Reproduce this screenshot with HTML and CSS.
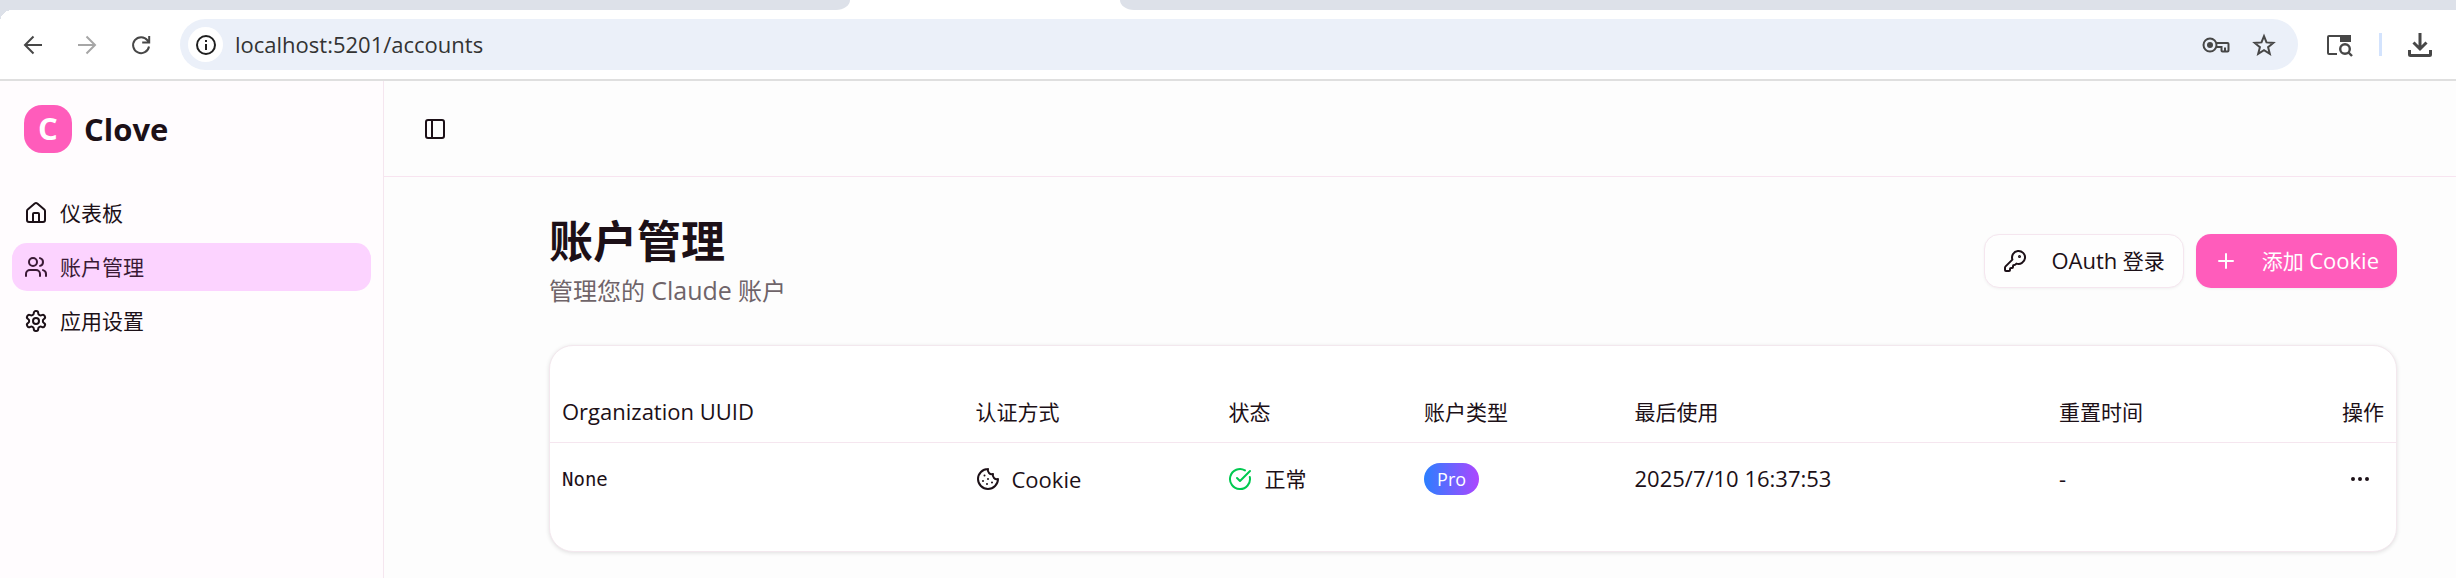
FILE: index.html
```html
<!DOCTYPE html>
<html lang="zh-CN">
  <head>
    <meta charset="UTF-8" />
    <meta name="viewport" content="width=device-width, initial-scale=1.0" />
    <title>Clove</title>
    <link rel="stylesheet" href="styles.css">
  </head>
  <body>
    <div class="browser">
      <div class="tab-strip">
        <div class="tabs-before"></div>
        <div class="tab-active"></div>
        <div class="tabs-after"></div>
      </div>
      <div class="toolbar">
        <div class="nav-buttons">
          <button class="tool-btn" aria-label="Back">
            <svg width="24" height="24" viewBox="0 0 24 24" fill="none" stroke="currentColor" stroke-width="2"><path d="M21 12H4.500M12.500 3.500 4 12l8.500 8.500" /></svg>
          </button>
          <button class="tool-btn" aria-label="Forward" disabled>
            <svg width="24" height="24" viewBox="0 0 24 24" fill="none" stroke="currentColor" stroke-width="2"><path d="M3 12h16.500M11.500 3.500 20 12l-8.500 8.500" /></svg>
          </button>
          <button class="tool-btn" aria-label="Reload">
            <svg width="24" height="24" viewBox="0 0 24 24" fill="none" stroke="currentColor" stroke-width="2"><path d="M20 13.500A8 8 0 1 1 18.500 7.300L20 9M20.200 3v6.500h-7" /></svg>
          </button>
        </div>
        <div class="address-bar">
          <button class="site-info" aria-label="Site information">
            <svg width="22" height="22" viewBox="0 0 22 22" fill="none" stroke="currentColor" stroke-width="2"><circle cx="11" cy="11" r="9" /><path d="M11 10v6M11 6v2" /></svg>
          </button>
          <input class="address-input" type="text" aria-label="Address" value="localhost:5201/accounts" />
          <button class="tool-btn" aria-label="Passwords">
            <svg width="30" height="24" viewBox="0 0 30 24" fill="none" stroke="currentColor" stroke-width="2"><circle cx="9" cy="12" r="6.500" /><circle cx="9" cy="12" r="3" fill="currentColor" stroke="none" /><path d="M15 10h11.500a1 1 0 0 1 1 1v6.500a1 1 0 0 1-1 1h-5a1 1 0 0 1-1-1V14H15M24 14.500v3.500" /></svg>
          </button>
          <button class="tool-btn" aria-label="Bookmark">
            <svg width="24" height="24" viewBox="0 0 24 24" fill="none" stroke="currentColor" stroke-width="2"><path d="m12 3.200 2.500 6.200 6.800.500-5.200 4.300 1.700 6.600-5.800-3.600-5.800 3.600 1.700-6.600-5.200-4.300 6.800-.500z" /></svg>
          </button>
        </div>
        <div class="extra-buttons">
          <button class="tool-btn" aria-label="Search tabs">
            <svg width="28" height="24" viewBox="0 0 28 24" fill="none" stroke="currentColor" stroke-width="2"><path d="M12 21H4a1 1 0 0 1-1-1V4a1 1 0 0 1 1-1h20a1 1 0 0 1 1 1v4" /><path d="M15 2h11v7H15z" fill="currentColor" stroke="none" /><circle cx="20" cy="16" r="4.800" stroke-width="2.400" /><path d="m23 19 4 4" stroke-width="2.400" /></svg>
          </button>
          <span class="toolbar-divider"></span>
          <button class="tool-btn" aria-label="Downloads">
            <svg width="24" height="24" viewBox="0 0 24 24" fill="none" stroke="currentColor" stroke-width="3"><path d="M12 0v16M5.500 9.500 12 16l6.500-6.500M1.500 17v4.500a1 1 0 0 0 1 1h19a1 1 0 0 0 1-1V17" /></svg>
          </button>
        </div>
      </div>
    </div>

    <div class="app">
      <aside class="sidebar">
        <div class="brand">
          <span class="brand-logo">C</span>
          <span class="brand-name">Clove</span>
        </div>
        <nav class="menu">
          <a class="menu-item" href="#">
            <svg class="icon" viewBox="0 0 24 24"><path d="M15 21v-8a1 1 0 0 0-1-1h-4a1 1 0 0 0-1 1v8" /><path d="M3 10a2 2 0 0 1 .709-1.528l7-5.999a2 2 0 0 1 2.582 0l7 5.999A2 2 0 0 1 21 10v9a2 2 0 0 1-2 2H5a2 2 0 0 1-2-2z" /></svg>
            <span>仪表板</span>
          </a>
          <a class="menu-item active" href="#">
            <svg class="icon" viewBox="0 0 24 24"><path d="M16 21v-2a4 4 0 0 0-4-4H6a4 4 0 0 0-4 4v2" /><path d="M16 3.128a4 4 0 0 1 0 7.744" /><path d="M22 21v-2a4 4 0 0 0-3-3.870" /><circle cx="9" cy="7" r="4" /></svg>
            <span>账户管理</span>
          </a>
          <a class="menu-item" href="#">
            <svg class="icon" viewBox="0 0 24 24"><path d="M12.220 2h-.440a2 2 0 0 0-2 2v.180a2 2 0 0 1-1 1.730l-.430.250a2 2 0 0 1-2 0l-.150-.080a2 2 0 0 0-2.730.730l-.220.380a2 2 0 0 0 .730 2.730l.150.100a2 2 0 0 1 1 1.720v.510a2 2 0 0 1-1 1.740l-.150.090a2 2 0 0 0-.730 2.730l.220.380a2 2 0 0 0 2.730.730l.150-.080a2 2 0 0 1 2 0l.430.250a2 2 0 0 1 1 1.730V20a2 2 0 0 0 2 2h.440a2 2 0 0 0 2-2v-.180a2 2 0 0 1 1-1.730l.430-.250a2 2 0 0 1 2 0l.150.080a2 2 0 0 0 2.730-.730l.220-.390a2 2 0 0 0-.730-2.730l-.150-.080a2 2 0 0 1-1-1.740v-.500a2 2 0 0 1 1-1.740l.150-.090a2 2 0 0 0 .730-2.730l-.220-.380a2 2 0 0 0-2.730-.730l-.150.080a2 2 0 0 1-2 0l-.430-.250a2 2 0 0 1-1-1.730V4a2 2 0 0 0-2-2z" /><circle cx="12" cy="12" r="3" /></svg>
            <span>应用设置</span>
          </a>
        </nav>
      </aside>

      <div class="main">
        <header class="topbar">
          <button class="icon-btn" aria-label="Toggle Sidebar">
            <svg class="icon" viewBox="0 0 24 24"><rect width="18" height="18" x="3" y="3" rx="2" /><path d="M9 3v18" /></svg>
          </button>
        </header>

        <main class="content">
          <div class="page-header">
            <div>
              <h1>账户管理</h1>
              <p class="subtitle">管理您的 <span class="latin">Claude</span> 账户</p>
            </div>
            <div class="actions">
              <button class="btn btn-outline">
                <svg class="icon" viewBox="0 0 24 24"><path d="M2.586 17.414A2 2 0 0 0 2 18.828V21a1 1 0 0 0 1 1h3a1 1 0 0 0 1-1v-1a1 1 0 0 1 1-1h1a1 1 0 0 0 1-1v-1a1 1 0 0 1 1-1h.172a2 2 0 0 0 1.414-.586l.814-.814a6.500 6.500 0 1 0-4-4z" /><circle cx="16.500" cy="7.500" r=".5" fill="currentColor" /></svg>
                <span><span class="latin">OAuth</span> 登录</span>
              </button>
              <button class="btn btn-primary">
                <svg class="icon" viewBox="0 0 24 24"><path d="M5 12h14M12 5v14" /></svg>
                <span>添加 <span class="latin">Cookie</span></span>
              </button>
            </div>
          </div>

          <div class="card">
            <table class="accounts">
              <thead>
                <tr>
                  <th class="col-uuid"><span class="latin">Organization UUID</span></th>
                  <th class="col-auth">认证方式</th>
                  <th class="col-status">状态</th>
                  <th class="col-type">账户类型</th>
                  <th class="col-used">最后使用</th>
                  <th>重置时间</th>
                  <th class="col-actions">操作</th>
                </tr>
              </thead>
              <tbody>
                <tr>
                  <td class="uuid">None</td>
                  <td>
                    <div class="cell">
                      <svg class="icon" viewBox="0 0 24 24"><path d="M12 2a10 10 0 1 0 10 10 4 4 0 0 1-5-5 4 4 0 0 1-5-5" /><path d="M8.500 8.500v.010M16 15.500v.010M12 12v.010M11 17v.010M7 14v.010" /></svg>
                      <span class="latin">Cookie</span>
                    </div>
                  </td>
                  <td>
                    <div class="cell">
                      <svg class="icon icon-ok" viewBox="0 0 24 24"><path d="M21.801 10A10 10 0 1 1 17 3.335" /><path d="m9 11 3 3L22 4" /></svg>
                      <span>正常</span>
                    </div>
                  </td>
                  <td><span class="badge">Pro</span></td>
                  <td><span class="latin">2025/7/10 16:37:53</span></td>
                  <td><span class="latin">-</span></td>
                  <td class="col-actions">
                    <button class="icon-btn" aria-label="操作">
                      <svg class="icon" viewBox="0 0 24 24"><circle cx="12" cy="12" r="1" /><circle cx="19" cy="12" r="1" /><circle cx="5" cy="12" r="1" /></svg>
                    </button>
                  </td>
                </tr>
              </tbody>
            </table>
          </div>
        </main>
      </div>
    </div>
  </body>
</html>
```

FILE: styles.css
```css
* {
  box-sizing: border-box;
}
body {
  margin: 0;
  min-height: 100vh;
  display: flex;
  flex-direction: column;
  font-family: "Open Sans", "Noto Sans CJK SC", sans-serif;
  font-size: 21px;
  line-height: 30px;
  color: #1c1017;
  background: #fdfdfd;
}
button,
input {
  font: inherit;
  color: inherit;
  border: none;
  background: none;
  padding: 0;
}
button {
  cursor: pointer;
}
svg {
  display: block;
  flex-shrink: 0;
}
.icon {
  width: 24px;
  height: 24px;
  fill: none;
  stroke: currentColor;
  stroke-width: 2;
  stroke-linecap: round;
  stroke-linejoin: round;
}
/* Open Sans looks small next to the Chinese glyphs */
.latin {
  font-size: 22px;
  line-height: 1;
}

/* browser bar */
.browser {
  background: #fff;
  border-bottom: 2px solid #dfdfdf;
  color: #474747;
}
.tab-strip {
  display: flex;
  height: 10px;
}
.tabs-before,
.tabs-after {
  background: #dde1e9;
}
.tabs-before {
  width: 850px;
  border-bottom-right-radius: 14px 10px;
}
.tab-active {
  width: 270px;
}
.tabs-after {
  flex: 1;
  border-bottom-left-radius: 14px 10px;
}
.toolbar {
  display: flex;
  align-items: center;
  gap: 27px;
  padding: 9px 24px 9px 21px;
  background: radial-gradient(circle at 12px 12px, #fff 12px, #dde1e9 12px) 0 0 / 12px 12px no-repeat;
}
.nav-buttons {
  display: flex;
  gap: 30px;
}
.tool-btn:disabled {
  color: #a6a6a6;
}
.address-bar {
  flex: 1;
  display: flex;
  align-items: center;
  gap: 21px;
  height: 51px;
  padding: 0 22px 0 8px;
  border-radius: 26px;
  background: #ebf0f9;
}
.site-info {
  display: flex;
  align-items: center;
  justify-content: center;
  width: 35px;
  height: 35px;
  margin-right: -9px;
  border-radius: 50%;
  background: #fff;
  color: #1f1f1f;
}
.address-input {
  flex: 1;
  font-size: 22px;
  line-height: 28px;
  padding-bottom: 2px;
  color: #333;
}
.extra-buttons {
  display: flex;
  align-items: center;
  gap: 26px;
}
.toolbar-divider {
  width: 3px;
  height: 23px;
  background: #d3e3fd;
}

/* layout */
.app {
  flex: 1;
  display: flex;
}
.sidebar {
  width: 384px;
  border-right: 1px solid #f5e6ef;
  background: #fffcfe;
}
.brand {
  display: flex;
  align-items: center;
  gap: 12px;
  padding: 24px;
}
.brand-logo {
  width: 48px;
  height: 48px;
  border-radius: 18px;
  background: #ff5cbb;
  color: #fff;
  font-size: 31px;
  font-weight: 700;
  line-height: 46px;
  text-align: center;
}
.brand-name {
  font-size: 31px;
  font-weight: 700;
}
.menu {
  display: flex;
  flex-direction: column;
  gap: 6px;
  padding: 12px;
}
.menu-item {
  display: flex;
  align-items: center;
  gap: 12px;
  height: 48px;
  padding: 0 12px;
  border-radius: 15px;
  color: inherit;
  text-decoration: none;
}
.menu-item.active {
  background: #fcd3ff;
  color: #3a1a35;
}
.main {
  flex: 1;
}
.topbar {
  display: flex;
  align-items: center;
  height: 96px;
  padding: 0 27px;
  border-bottom: 1px solid #f8e4f0;
}
.icon-btn {
  display: inline-flex;
  align-items: center;
  justify-content: center;
  width: 48px;
  height: 48px;
}
.content {
  padding: 36px 59px 25px 165px;
}
.page-header {
  display: flex;
  align-items: center;
  justify-content: space-between;
  margin-bottom: 36px;
}
h1 {
  margin: 0 0 4px;
  font-size: 44px;
  font-weight: 700;
  line-height: 56px;
}
.subtitle {
  margin: 0;
  font-size: 24px;
  line-height: 36px;
  color: #6f6469;
}
.subtitle .latin {
  font-size: 25px;
}
.actions {
  display: flex;
  gap: 12px;
}
.btn {
  display: flex;
  align-items: center;
  gap: 24px;
  height: 54px;
  padding: 0 18px;
  border-radius: 15px;
  box-shadow: 0 1px 3px rgba(0, 0, 0, 0.05);
}
.btn-outline {
  border: 1px solid #f5e6ef;
  background: #fefefe;
}
.btn-primary {
  background: #ff5cbb;
  color: #fff;
}

/* accounts table */
.card {
  padding: 36px 0;
  border: 1px solid #f3e8ee;
  border-radius: 24px;
  background: #fff;
  box-shadow: 0 1px 4px rgba(0, 0, 0, 0.12);
}
.accounts {
  width: 100%;
  table-layout: fixed;
  border-collapse: collapse;
}
.accounts th {
  height: 60px;
  padding: 0 12px;
  border-bottom: 1px solid #f5e6ef;
  font-weight: 400;
  text-align: left;
}
.accounts td {
  height: 72px;
  padding: 12px;
}
.col-uuid {
  width: 22.4%;
}
.col-auth {
  width: 13.7%;
}
.col-status {
  width: 10.6%;
}
.col-type {
  width: 11.4%;
}
.col-used {
  width: 23%;
}
.accounts .col-actions {
  text-align: right;
}
.accounts .icon-btn {
  vertical-align: middle;
}
.accounts .uuid {
  font-family: "DejaVu Sans Mono", monospace;
  font-size: 19px;
}
.cell {
  display: flex;
  align-items: center;
  gap: 12px;
}
.icon-ok {
  color: #00c950;
}
.badge {
  display: inline-block;
  padding: 0 13px;
  border-radius: 16px;
  background: linear-gradient(to right, #2b7fff, #ad46ff);
  color: #fff;
  font-size: 18px;
  line-height: 32px;
  vertical-align: middle;
}
```
